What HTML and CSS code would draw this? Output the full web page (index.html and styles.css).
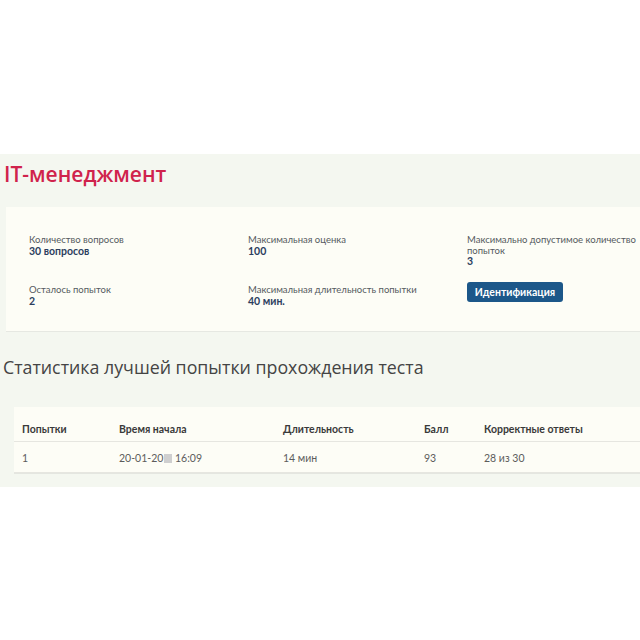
FILE: index.html
```html
<!DOCTYPE html>
<html lang="ru">
<head>
<meta charset="utf-8">
<link rel="stylesheet" href="styles.css">
</head>
<body>
<div class="top"></div>
<main class="section">
  <h1 class="title">IT-менеджмент</h1>
  <div class="info-card">
    <div class="info-grid">
      <div class="item">
        <div class="label">Количество вопросов</div>
        <div class="value">30 вопросов</div>
      </div>
      <div class="item">
        <div class="label">Максимальная оценка</div>
        <div class="value">100</div>
      </div>
      <div class="item">
        <div class="label">Максимально допустимое количество попыток</div>
        <div class="value">3</div>
      </div>
      <div class="item">
        <div class="label">Осталось попыток</div>
        <div class="value">2</div>
      </div>
      <div class="item">
        <div class="label">Максимальная длительность попытки</div>
        <div class="value">40 мин.</div>
      </div>
      <div class="item">
        <button class="btn">Идентификация</button>
      </div>
    </div>
  </div>
  <h2 class="subtitle">Статистика лучшей попытки прохождения теста</h2>
  <div class="table-card">
    <table class="stats">
      <colgroup>
        <col class="c1"><col class="c2"><col class="c3"><col class="c4"><col class="c5">
      </colgroup>
      <thead>
        <tr><th>Попытки</th><th>Время начала</th><th>Длительность</th><th>Балл</th><th>Корректные ответы</th></tr>
      </thead>
      <tbody>
        <tr><td>1</td><td>20-01-20<span class="blur"></span> 16:09</td><td>14 мин</td><td>93</td><td>28 из 30</td></tr>
      </tbody>
    </table>
  </div>
</main>
</body>
</html>
```

FILE: styles.css
```css
* { box-sizing: border-box; }
html, body { margin: 0; padding: 0; background: #ffffff; }
body { font-family: "Open Sans", "Noto Sans", sans-serif; width: 640px; overflow: hidden; }
.top { height: 154px; background: #ffffff; }
.section {
  background: #f4f7f0;
  padding: 5px 0 13px 0;
}
.title {
  margin: 0 0 18px 4px;
  font-size: 21px;
  line-height: 30px;
  font-weight: 600;
  color: #d0234c;
}
.info-card {
  margin-left: 6px;
  background: #fdfdf6;
  border-bottom: 1px solid #e6e8e2;
  padding: 28px 0 24px 23px;
}
.info-grid {
  display: grid;
  grid-template-columns: 219px 219px 219px;
  row-gap: 18px;
}
.item { max-width: 180px; font-family: Lato, "Open Sans", sans-serif; }
.label {
  font-size: 9.5px;
  line-height: 10.5px;
  color: #555a60;
}
.value {
  font-size: 10.5px;
  line-height: 11px;
  font-weight: 700;
  color: #2c3e5e;
}
.btn {
  display: block;
  margin-top: -3px;
  background: #1c5789;
  color: #ffffff;
  border: none;
  border-radius: 3px;
  font-family: Lato, "Open Sans", sans-serif;
  font-size: 10.5px;
  font-weight: 700;
  height: 20px;
  width: 96px;
  padding: 0;
}
.subtitle {
  margin: 21px 0 26px 3px;
  font-size: 17.8px;
  line-height: 28px;
  font-weight: 400;
  color: #444444;
}
.table-card {
  margin-left: 14px;
  background: #fdfdf6;
  border-bottom: 1px solid #e4e6e0;
  padding: 8px 0 0 0;
}
.stats {
  border-collapse: collapse;
  table-layout: fixed;
  width: 626px;
  font-family: Lato, "Open Sans", sans-serif;
  font-size: 10.5px;
}
.c1 { width: 97px; }
.c2 { width: 164px; }
.c3 { width: 141px; }
.c4 { width: 60px; }
.c5 { width: 164px; }
.stats th, .stats td { text-align: left; padding-left: 8px; }
.stats th {
  font-weight: 700;
  color: #3a3a3a;
  padding-top: 7px;
  padding-bottom: 5px;
  line-height: 14px;
  border-bottom: 1px solid #e6e6e0;
}
.stats td {
  color: #5c5c5c;
  padding-top: 9px;
  padding-bottom: 7px;
  line-height: 14px;
  border-bottom: 1px solid #e6e6e0;
}
.blur {
  display: inline-block;
  width: 8px;
  height: 9px;
  background: #cfcfcf;
  vertical-align: -1px;
  margin-left: 1px;
}
```
